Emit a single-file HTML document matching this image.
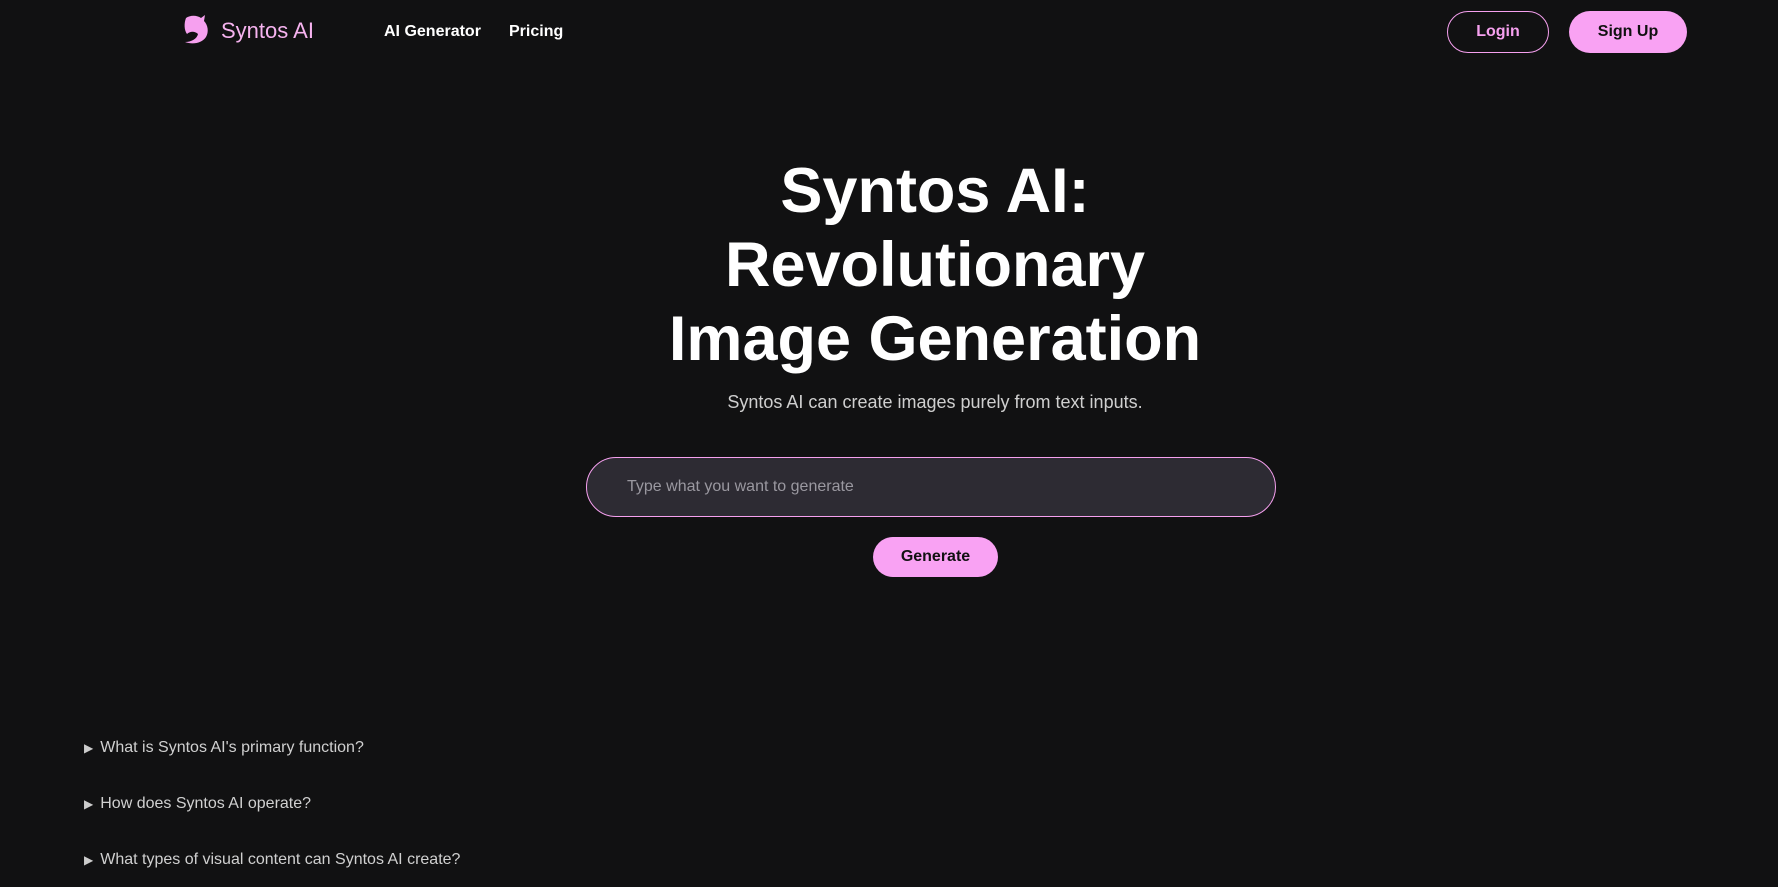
<!DOCTYPE html>
<html><head><meta charset="utf-8"><style>
*{margin:0;padding:0;box-sizing:border-box}
body{width:1778px;height:887px;background:#111112;font-family:"Liberation Sans",sans-serif;color:#fff;position:relative;overflow:hidden}
.a{position:absolute}
.nav{font-size:16px;font-weight:bold;top:22px}
.btn{position:absolute;top:11px;height:42px;border-radius:21px;font-weight:bold;font-size:16px;display:flex;align-items:center;justify-content:center}
h1{position:absolute;left:0;width:1870px;text-align:center;top:154px;font-size:63px;line-height:74px;font-weight:bold}
.faq{position:absolute;left:84px;font-size:16px;color:#d0d0d0}
.faq span{font-size:12px;margin-right:7px;color:#ccc}
</style></head><body>
<svg class="a" style="left:182px;top:14px" width="28" height="32" viewBox="0 0 28 32">
<path d="M4 4 C8 1 15 1 19 4 L23 1 L22 7 C26 11 27 18 24 23 C20 29 11 31 3 28 C9 28 15 25 16 20 C13 17 8 17 5 20 C2 16 2 9 4 4Z" fill="#f6a0ef"/>
</svg>
<div class="a" style="left:221px;top:18px;font-size:22px;color:#f6b3ef">Syntos AI</div>
<div class="a nav" style="left:384px;top:23px">AI Generator</div>
<div class="a nav" style="left:509px;top:23px">Pricing</div>
<div class="btn" style="left:1447px;width:102px;border:1px solid #f6a0ef;color:#f6a0ef">Login</div>
<div class="btn" style="left:1569px;width:118px;background:#f9a2f3;color:#111">Sign Up</div>
<h1>Syntos AI:<br>Revolutionary<br>Image Generation</h1>
<div class="a" style="left:0;width:1870px;text-align:center;top:392px;font-size:18px;color:#cfcfcf">Syntos AI can create images purely from text inputs.</div>
<div class="a" style="left:586px;top:457px;width:690px;height:60px;border:1px solid #f6a0ef;border-radius:30px;background:#2d2b33;color:#9a98a0;font-size:16px;padding:20px 0 0 40px">Type what you want to generate</div>
<div class="btn" style="left:873px;top:537px;width:125px;height:40px;background:#f9a2f3;color:#111">Generate</div>
<div class="faq" style="top:739px"><span>▶</span>What is Syntos AI's primary function?</div>
<div class="faq" style="top:795px"><span>▶</span>How does Syntos AI operate?</div>
<div class="faq" style="top:851px"><span>▶</span>What types of visual content can Syntos AI create?</div>
</body></html>
